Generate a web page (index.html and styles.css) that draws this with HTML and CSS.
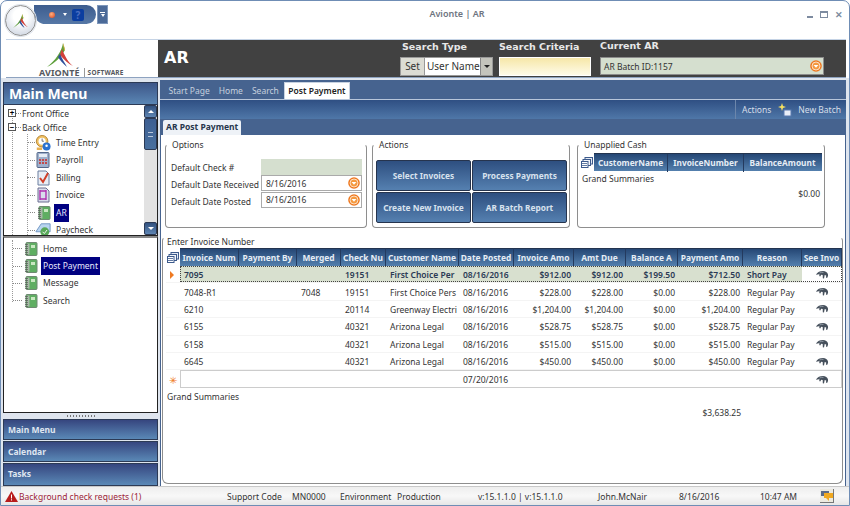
FILE: index.html
```html
<!DOCTYPE html>
<html lang="en">
<head>
<meta charset="utf-8">
<title>Avionte | AR</title>
<link rel="stylesheet" href="styles.css">
</head>
<body>
<svg class="defs" width="0" height="0" aria-hidden="true">
  <symbol id="amark" viewBox="0 0 26 24">
    <path d="M16 0C15 8 8 18 0 24 8 20 14 14 18 7z" fill="#5fa03c"/>
    <path d="M16 0c0 3 1 5 1 7l1 1c-.2-3-1-6-2-8z" fill="#e0b040"/>
    <path d="M15 6C18 14 22 20 26 23 22 21 17 17 13 12z" fill="#d2403a"/>
    <path d="M13 11C15 16 18 20 20 24 16 21 13 17 11 14z" fill="#2f4f9a"/>
  </symbol>
  <symbol id="book" viewBox="0 0 16 16">
    <rect x="4" y="1.500" width="11" height="13" rx="1" fill="#5fae62" stroke="#6f8a72"/>
    <rect x="5" y="2.500" width="2.500" height="11" fill="#a8b8a8"/>
    <rect x="9" y="4" width="4" height="3" fill="#c8e8c0"/>
    <path d="M3 3.500h3M3 5.500h3M3 7.500h3M3 9.500h3M3 11.500h3M3 13.500h3" stroke="#555" stroke-width=".7"/>
  </symbol>
  <symbol id="clock" viewBox="0 0 18 18">
    <circle cx="8" cy="7" r="6.5" fill="#f0c060" stroke="#b08030"/>
    <circle cx="8" cy="7" r="4" fill="#fff"/>
    <path d="M8 4v3h2" stroke="#666" fill="none"/>
    <circle cx="13" cy="13" r="4.5" fill="#2a72d0"/>
    <circle cx="13" cy="12" r="1.4" fill="#fff"/>
    <path d="M2 14h6v3H2z" fill="#e8b050"/>
  </symbol>
  <symbol id="calc" viewBox="0 0 16 16">
    <rect x="2" y="0.5" width="12" height="15" rx="1" fill="#9fb0cc" stroke="#55688a"/>
    <rect x="4" y="2" width="8" height="3" fill="#e6ecf5"/>
    <path d="M4 7h2v2H4zM7 7h2v2H7zM10 7h2v2h-2zM4 10h2v2H4zM7 10h2v2H7zM10 10h2v2h-2z" fill="#c24a4a"/>
  </symbol>
  <symbol id="bill" viewBox="0 0 16 16">
    <path d="M3 1h8l3 3v11H3z" fill="#e8edf5" stroke="#6a7ea0"/>
    <path d="M5 8l3 4 5-9" fill="none" stroke="#d0402a" stroke-width="2"/>
  </symbol>
  <symbol id="inv" viewBox="0 0 16 16">
    <path d="M3 1h8l3 3v11H3z" fill="#d8dcec" stroke="#6a6e90"/>
    <path d="M5 3v10M11 3v10M5 4h6M5 12h6" stroke="#b030b0" stroke-width="1.4" fill="none"/>
  </symbol>
  <symbol id="pay" viewBox="0 0 18 18">
    <path d="M1 11L7 2h10v9z" fill="#b8d4f0" stroke="#6a90c0"/>
    <circle cx="11" cy="11" r="5" fill="#58a858"/>
    <path d="M8.500 11l2 2 3-4" stroke="#fff" fill="none"/>
  </symbol>
  <symbol id="hand" viewBox="0 0 14 10">
    <path d="M1 4.500C2.500 2 5 1 8 1c2.500 0 4.500 1.500 5 3.500.2 1.200-.2 2.500-1 3.500l-1-.5.2-2-1.500-.5-.7 3.500-1.200-.2-.1-3.300-1.500-.2-1 1.800-1-.5.4-1.600-1.500-.3-1.100.6z" fill="#46505c"/>
    <path d="M4.500 3c1.200-.6 2.600-.8 4-.6" stroke="#a0aab4" stroke-width=".8" fill="none"/>
  </symbol>
  <symbol id="chooser" viewBox="0 0 12 11">
    <rect x="4" y="0.500" width="7.500" height="6.500" fill="#e4eaf4" stroke="#3c5a8c"/>
    <rect x="2" y="2.500" width="7.500" height="6" fill="#f2f5fa" stroke="#3c5a8c"/>
    <rect x="0.500" y="4.500" width="6.500" height="6" fill="#fff" stroke="#3c5a8c"/>
    <path d="M1 6.500h5M1 8.500h5" stroke="#3c5a8c" stroke-width=".8"/>
  </symbol>
  <symbol id="drop" viewBox="0 0 12 12">
    <circle cx="6" cy="6" r="5.800" fill="#ef7a22"/>
    <circle cx="6" cy="6" r="4" fill="#f59a40" stroke="#fff" stroke-width=".7"/>
    <path d="M3.600 5h4.800L6 7.800z" fill="#fff"/>
  </symbol>
</svg>
<div class="window">
  <div class="titlebar">
    <div class="orb">
      <svg width="15" height="14"><use href="#amark"/></svg>
    </div>
    <div class="quickbar">
      <span class="qa-dot"></span>
      <span class="qa-caret"></span>
      <span class="qa-help">?</span>
    </div>
    <div class="qa-more"><span class="qa-more-bar"></span><span class="qa-caret"></span></div>
    <div class="app-title">Avionte | AR</div>
    <div class="winbtns">
      <span class="win-min"></span>
      <span class="win-max"></span>
      <span class="win-close">✕</span>
    </div>
  </div>

  <div class="header">
    <div class="logo">
      <svg class="logo-mark" width="26" height="24"><use href="#amark"/></svg>
      <div class="logo-text"><span class="logo-name">AVIONTÉ</span><span class="logo-sw">SOFTWARE</span></div>
    </div>
    <div class="header-bar">
      <div class="page-title">AR</div>
      <div class="search-type">
        <div class="hlabel">Search Type</div>
        <div class="type-ctl"><span class="set-btn">Set</span><span class="type-val">User Name</span><span class="type-drop"></span></div>
      </div>
      <div class="search-crit">
        <div class="hlabel">Search Criteria</div>
        <div class="crit-input"></div>
      </div>
      <div class="current-ar">
        <div class="hlabel">Current AR</div>
        <div class="ar-field"><span>AR Batch ID:1157</span><svg width="12" height="12"><use href="#drop"/></svg></div>
      </div>
    </div>
  </div>

  <div class="main">
    <aside class="sidebar">
      <div class="menu-title">Main Menu</div>
      <div class="tree-top">
        <div class="tree-scroll">
          <div class="root"><span class="exp">+</span><span class="twig"></span><span>Front Office</span></div>
          <div class="root"><span class="exp">−</span><span class="twig"></span><span>Back Office</span></div>
          <ul class="branch">
            <li><span class="twig long"></span><svg width="16" height="16"><use href="#clock"/></svg><span class="lbl">Time Entry</span></li>
            <li><span class="twig long"></span><svg width="16" height="16"><use href="#calc"/></svg><span class="lbl">Payroll</span></li>
            <li><span class="twig long"></span><svg width="16" height="16"><use href="#bill"/></svg><span class="lbl">Billing</span></li>
            <li><span class="twig long"></span><svg width="16" height="16"><use href="#inv"/></svg><span class="lbl">Invoice</span></li>
            <li><span class="twig long"></span><svg width="16" height="16"><use href="#book"/></svg><span class="lbl sel">AR</span></li>
            <li><span class="twig long"></span><svg width="16" height="16"><use href="#pay"/></svg><span class="lbl">Paycheck</span></li>
          </ul>
        </div>
        <div class="scrollbar">
          <span class="sb-btn"><i class="up"></i></span>
          <span class="sb-thumb"><i></i></span>
          <span class="sb-track"></span>
          <span class="sb-btn"><i class="down"></i></span>
        </div>
      </div>
      <div class="tree-bottom">
        <ul class="branch sub">
          <li><span class="twig"></span><svg width="16" height="16"><use href="#book"/></svg><span class="lbl">Home</span></li>
          <li><span class="twig"></span><svg width="16" height="16"><use href="#book"/></svg><span class="lbl sel">Post Payment</span></li>
          <li><span class="twig"></span><svg width="16" height="16"><use href="#book"/></svg><span class="lbl">Message</span></li>
          <li><span class="twig"></span><svg width="16" height="16"><use href="#book"/></svg><span class="lbl">Search</span></li>
        </ul>
      </div>
      <div class="grip"></div>
      <div class="nav-btn">Main Menu</div>
      <div class="nav-btn">Calendar</div>
      <div class="nav-btn">Tasks</div>
    </aside>

    <section class="content">
      <div class="tabstrip">
        <span class="tab">Start Page</span>
        <span class="tab">Home</span>
        <span class="tab">Search</span>
        <span class="tab active">Post Payment</span>
      </div>
      <div class="toolbar">
        <span class="tool-sep"></span>
        <span class="tool">Actions</span>
        <svg class="tool-icon" width="14" height="14" viewBox="0 0 14 14"><path d="M4 0l1 3 3 1-3 1-1 3-1-3-3-1 3-1z" fill="#f5e060"/><rect x="6" y="7" width="7" height="6" fill="#e8eef8" stroke="#5a7ab0"/></svg>
        <span class="tool">New Batch</span>
      </div>
      <div class="subtabs"><span class="subtab">AR Post Payment</span></div>
      <div class="panel">
        <div class="groups">
          <div class="group options">
            <div class="legend">Options</div>
            <div class="form">
              <label>Default Check #</label><div class="field green"></div>
              <label>Default Date Received</label><div class="field"><span>8/16/2016</span><svg width="12" height="12"><use href="#drop"/></svg></div>
              <label>Default Date Posted</label><div class="field"><span>8/16/2016</span><svg width="12" height="12"><use href="#drop"/></svg></div>
            </div>
          </div>
          <div class="group actions">
            <div class="legend">Actions</div>
            <div class="btn-grid">
              <span class="action-btn">Select Invoices</span>
              <span class="action-btn">Process Payments</span>
              <span class="action-btn">Create New Invoice</span>
              <span class="action-btn">AR Batch Report</span>
            </div>
          </div>
          <div class="group unapplied">
            <div class="legend">Unapplied Cash</div>
            <div class="mini-head">
              <svg width="12" height="11"><use href="#chooser"/></svg>
              <div class="mini-cols"><span>CustomerName</span><span>InvoiceNumber</span><span>BalanceAmount</span></div>
            </div>
            <div class="summary-label">Grand Summaries</div>
            <div class="summary-val">$0.00</div>
          </div>
        </div>

        <div class="group invoices">
          <div class="legend">Enter Invoice Number</div>
          <div class="grid">
            <div class="row head"><span class="mark"><svg width="12" height="11"><use href="#chooser"/></svg></span>
              <b>Invoice Num</b><b>Payment By</b><b>Merged</b><b>Check Nu</b><b>Customer Name</b><b>Date Posted</b><b>Invoice Amo</b><b>Amt Due</b><b>Balance A</b><b>Payment Amo</b><b>Reason</b><b>See Invo</b>
            </div>
            <div class="row current"><span class="mark"><i class="arrow"></i></span>
              <span>7095</span><span></span><span></span><span>19151</span><span>First Choice Per</span><span>08/16/2016</span><span class="r">$912.00</span><span class="r">$912.00</span><span class="r">$199.50</span><span class="r">$712.50</span><span>Short Pay</span><span class="see"><svg width="14" height="10"><use href="#hand"/></svg></span>
            </div>
            <div class="row"><span class="mark"></span>
              <span>7048-R1</span><span></span><span>7048</span><span>19151</span><span>First Choice Pers</span><span>08/16/2016</span><span class="r">$228.00</span><span class="r">$228.00</span><span class="r">$0.00</span><span class="r">$228.00</span><span>Regular Pay</span><span class="see"><svg width="14" height="10"><use href="#hand"/></svg></span>
            </div>
            <div class="row"><span class="mark"></span>
              <span>6210</span><span></span><span></span><span>20114</span><span>Greenway Electri</span><span>08/16/2016</span><span class="r">$1,204.00</span><span class="r">$1,204.00</span><span class="r">$0.00</span><span class="r">$1,204.00</span><span>Regular Pay</span><span class="see"><svg width="14" height="10"><use href="#hand"/></svg></span>
            </div>
            <div class="row"><span class="mark"></span>
              <span>6155</span><span></span><span></span><span>40321</span><span>Arizona Legal</span><span>08/16/2016</span><span class="r">$528.75</span><span class="r">$528.75</span><span class="r">$0.00</span><span class="r">$528.75</span><span>Regular Pay</span><span class="see"><svg width="14" height="10"><use href="#hand"/></svg></span>
            </div>
            <div class="row"><span class="mark"></span>
              <span>6158</span><span></span><span></span><span>40321</span><span>Arizona Legal</span><span>08/16/2016</span><span class="r">$515.00</span><span class="r">$515.00</span><span class="r">$0.00</span><span class="r">$515.00</span><span>Regular Pay</span><span class="see"><svg width="14" height="10"><use href="#hand"/></svg></span>
            </div>
            <div class="row"><span class="mark"></span>
              <span>6645</span><span></span><span></span><span>40321</span><span>Arizona Legal</span><span>08/16/2016</span><span class="r">$450.00</span><span class="r">$450.00</span><span class="r">$0.00</span><span class="r">$450.00</span><span>Regular Pay</span><span class="see"><svg width="14" height="10"><use href="#hand"/></svg></span>
            </div>
            <div class="row newrow"><span class="mark star">✳</span>
              <span></span><span></span><span></span><span></span><span></span><span>07/20/2016</span><span></span><span></span><span></span><span></span><span></span><span class="see"><svg width="14" height="10"><use href="#hand"/></svg></span>
            </div>
          </div>
          <div class="grand">Grand Summaries</div>
          <div class="grand-total">$3,638.25</div>
        </div>
      </div>
    </section>
  </div>

  <footer class="status">
    <svg class="warn" width="13" height="11" viewBox="0 0 13 11"><path d="M6.500 0L13 11H0z" fill="#b81c1c"/><path d="M6 3.500h1v4H6zM6 8.300h1v1.200H6z" fill="#fff"/></svg>
    <span class="alert">Background check requests (1)</span>
    <span class="st-support">Support Code</span>
    <span class="st-code">MN0000</span>
    <span class="st-env">Environment</span>
    <span class="st-prod">Production</span>
    <span class="st-ver">v:15.1.1.0 | v:15.1.1.0</span>
    <span class="st-user">John.McNair</span>
    <span class="st-date">8/16/2016</span>
    <span class="st-time">10:47 AM</span>
    <span class="st-chat"><svg width="12" height="10" viewBox="0 0 12 10"><rect x="0" y="0" width="8" height="5" fill="#5a6a88"/><rect x="3" y="2" width="9" height="5" fill="#f0a820"/><path d="M8 7v3l-3-3z" fill="#f0a820"/></svg></span>
  </footer>
</div>
</body>
</html>
```

FILE: styles.css
```css
* { box-sizing: border-box; }
html, body { margin: 0; padding: 0; }
body { width: 850px; height: 506px; overflow: hidden; font-family: "Noto Sans", "Liberation Sans", sans-serif; font-size: 8.5px; color: #333; background: #fff; }
.defs { position: absolute; }
ul { list-style: none; margin: 0; padding: 0; }

.window { width: 850px; height: 506px; display: flex; flex-direction: column; background: #fff; border: 1px solid #6f8db5; border-radius: 7px 7px 0 0; overflow: hidden; }

/* title bar */
.titlebar { height: 38px; flex: none; display: flex; align-items: flex-start; position: relative; padding: 4px 0 0 4px; }
.orb { width: 31px; height: 31px; border-radius: 50%; flex: none; border: 1px solid #8d8d8d; background: radial-gradient(circle at 50% 35%, #fff 30%, #cfd6e2 85%, #9aa7b8); display: flex; align-items: center; justify-content: center; position: relative; z-index: 1; box-shadow: 0 0 0 1px #dfe4ec; }
.quickbar { width: 62px; height: 19px; margin: 0 0 0 -2px; background: linear-gradient(#3d5c8e, #5678a6); border-radius: 0 10px 10px 0; border-bottom-left-radius: 12px; display: flex; align-items: center; padding-left: 15px; }
.qa-dot { width: 6px; height: 6px; border-radius: 50%; background: radial-gradient(circle at 40% 35%, #ffb080, #d8401a); margin-right: 8px; }
.qa-caret { width: 0; height: 0; border-left: 2.5px solid transparent; border-right: 2.5px solid transparent; border-top: 3px solid #fff; }
.qa-help { width: 12px; height: 12px; margin-left: 5px; background: #0b3ea0; border-radius: 2px; color: #4c6fc0; font-weight: 700; font-size: 10px; line-height: 12px; text-align: center; }
.qa-more { width: 11px; height: 19px; margin-left: 1px; background: #4b6a98; border: 1px solid #7e97bb; display: flex; flex-direction: column; align-items: center; justify-content: center; gap: 1px; }
.qa-more-bar { width: 5px; height: 1px; background: #fff; }
.app-title { position: absolute; left: 0; right: 0; top: 6px; padding-left: 64px; text-align: center; color: #6e7480; font-weight: 600; font-size: 9px; }
.winbtns { position: absolute; right: 6px; top: 9px; display: flex; align-items: center; gap: 7px; }
.win-min { width: 6px; height: 2px; margin-top: 5px; background: #7d8ba0; }
.win-max { width: 8px; height: 7px; border: 1px solid #7d8ba0; border-top-width: 2px; }
.win-close { font-size: 9px; line-height: 9px; color: #7d8ba0; font-weight: 700; }

/* header */
.header { height: 39px; flex: none; display: flex; margin-right: 3px; border-top: 1px solid #c5d3e5; margin-left: 5px; border-bottom: 1px solid #8ea3c0; }
.logo { width: 152px; flex: none; display: flex; flex-direction: column; align-items: flex-start; padding-left: 33px; }
.logo-mark { margin: 3px 0 0 8px; flex: none; }
.logo-text { display: flex; align-items: center; margin-top: 1px; white-space: nowrap; }
.logo-name { font-size: 9px; font-weight: 700; color: #55585e; letter-spacing: .1px; padding-right: 4px; border-right: 1px solid #999; line-height: 9px; }
.logo-sw { font-size: 6.500px; font-weight: 700; color: #55585e; margin-left: 3px; letter-spacing: .2px; }
.header-bar { flex: 1; background: #414141; display: flex; color: #fff; }
.page-title { width: 242px; padding: 8px 0 0 6px; font-size: 16px; font-weight: 700; line-height: 20px; font-family: "DejaVu Sans", sans-serif; }
.hlabel { font-weight: 700; font-size: 9.5px; line-height: 12px; color: #e8e8e8; font-family: "DejaVu Sans", sans-serif; }
.search-type { width: 99px; padding-top: 1px; }
.search-type .hlabel { padding-left: 2px; }
.type-ctl { margin-top: 4px; display: flex; height: 19px; width: 93px; background: #d0d0c8; border: 1px solid #999; color: #333; font-size: 10px; line-height: 17px; }
.set-btn { width: 24px; text-align: center; background: #dcdcd4; border-right: 1px solid #999; }
.type-val { width: 55px; background: #fff; padding-left: 2px; white-space: nowrap; overflow: hidden; }
.type-drop { flex: 1; position: relative; background: #c4c4bc; border-left: 1px solid #888; }
.type-drop::after { content: ""; position: absolute; left: 3px; top: 7px; border-left: 3px solid transparent; border-right: 3px solid transparent; border-top: 3px solid #222; }
.search-crit { width: 101px; padding-top: 1px; }
.crit-input { margin-top: 4px; width: 92px; height: 19px; background: linear-gradient(#f6e7a8, #fffbe8); border: 1px solid #fff; }
.current-ar { width: 224px; }
.ar-field { margin-top: 5px; height: 18px; background: #d5dfcf; border: 1px solid #8c8c8c; color: #333; font-size: 8.5px; display: flex; align-items: center; justify-content: space-between; padding: 0 1px 0 3px; }
.ar-field svg { flex: none; }

/* main */
.main { flex: 1; display: flex; min-height: 0; background: #dfe5ee; }
.sidebar { width: 155px; margin-left: 2px; flex: none; padding-top: 4px; display: flex; flex-direction: column; }
.menu-title { height: 23px; flex: none; background: linear-gradient(#3d5688, #5a86b4); border: 1px solid #2c3a55; color: #fff; font-size: 14px; font-weight: 700; padding-left: 5px; line-height: 21px; }
.tree-top { height: 131px; flex: none; display: flex; background: #fff; border: 1px solid #222; border-top: 0; overflow: hidden; }
.tree-scroll { flex: 1; overflow: hidden; padding: 1px 0 0 4px; position: relative; }
.tree-scroll::before { content: ""; position: absolute; left: 8px; top: 10px; bottom: 0; border-left: 1px dotted #999; }
.root { display: flex; align-items: center; height: 14px; color: #333; position: relative; }
.exp { width: 8px; height: 8px; flex: none; border: 1px solid #555; background: #fff; font-size: 8px; line-height: 5px; text-align: center; color: #000; font-weight: 700; }
.twig { width: 5px; flex: none; border-top: 1px dotted #888; margin-right: 1px; }
.twig.long { width: 8px; margin-right: 0; }
.branch { margin-left: 8px; border-left: 1px dotted #999; padding-top: 0; }
.tree-scroll .branch { margin-left: 7px; padding-left: 12px; border-left: 0; position: relative; }
.tree-scroll .branch::before { content: ""; position: absolute; left: 12px; top: 0; bottom: 0; border-left: 1px dotted #999; }
.branch li { height: 17.5px; display: flex; align-items: center; }
.branch svg { flex: none; }
.lbl { margin-left: 3px; height: 18px; line-height: 18px; padding: 0 2px; color: #333; white-space: nowrap; }
.lbl.sel { background: #000080; color: #e8e8ff; }
.scrollbar { width: 13px; flex: none; display: flex; flex-direction: column; background: #e2e2e2; }
.sb-btn { height: 13px; flex: none; background: linear-gradient(#31517f, #5e85b3); border: 1px solid #2c3a55; border-radius: 2px; display: flex; align-items: center; justify-content: center; }
.sb-btn i { width: 0; height: 0; border-left: 3px solid transparent; border-right: 3px solid transparent; }
.sb-btn i.up { border-bottom: 3px solid #fff; }
.sb-btn i.down { border-top: 3px solid #fff; }
.sb-thumb { height: 32px; flex: none; background: linear-gradient(#3d5f92, #49709f); border: 1px solid #2c3a55; border-radius: 2px; display: flex; align-items: center; justify-content: center; }
.sb-thumb i { width: 5px; height: 5px; border-top: 1px solid #b8c6da; border-bottom: 1px solid #b8c6da; }
.sb-track { flex: 1; }
.tree-bottom { height: 177px; flex: none; background: #fff; border: 1px solid #222; border-top: 2px solid #888; padding: 2px 0 0 8px; }
.branch.sub { margin-left: 0; height: 62px; border-left: 1px dotted #999; }
.branch.sub li { height: 17.400px; }
.branch.sub .twig { width: 9px; margin-right: 0; }
.grip { height: 6px; flex: none; background: repeating-linear-gradient(90deg, #777 0 1px, transparent 1px 3px) center / 28px 2px no-repeat; }
.nav-btn { height: 21px; margin-bottom: 1px; flex: none; background: linear-gradient(#36467f, #5a88b6); border: 1px solid #2c3a55; color: #dfe6f0; font-weight: 700; font-size: 8.5px; line-height: 19px; padding-left: 4px; }
.nav-btn:last-child { margin-bottom: 0; height: 23px; }

/* content */
.content { width: 686px; margin-left: 2px; flex: none; display: flex; flex-direction: column; }
.tabstrip { margin-top: 2px; height: 20px; flex: none; background: #46638f; display: flex; align-items: flex-end; padding-left: 4px; border-bottom: 1px solid #b8c6da; }
.tab { color: #c5d0de; height: 17px; line-height: 17px; padding: 0 4.500px; }
.tab.active { background: #fff; color: #222; font-weight: 600; padding: 0 3px; margin-left: 1px; border: 1px solid #c8d2e0; border-bottom: 0; line-height: 15px; }
.toolbar { height: 19px; flex: none; background: linear-gradient(#2f4f83, #4f77a8); display: flex; align-items: center; justify-content: flex-end; color: #d7dfe9; padding-right: 5px; }
.tool-sep { width: 1px; height: 19px; background: #6c86ab; margin-right: 6px; }
.tool-icon { margin: 0 6px 0 7px; }
.subtabs { height: 16px; flex: none; background: #46638f; padding: 1px 0 0 3px; display: flex; }
.subtab { background: #eef2f7; color: #27364c; font-weight: 700; height: 15px; line-height: 14px; padding: 0 3px; border-radius: 2px 2px 0 0; }
.panel { flex: 1; background: #fff; border-left: 1px solid #46638f; border-right: 1px solid #46638f; padding: 9px 2px 2px 1px; display: flex; flex-direction: column; min-height: 0; }
.groups { display: flex; height: 84px; margin-left: 3px; flex: none; }
.group { border: 1px solid #8e8e8e; border-top-color: transparent; border-radius: 4px; position: relative; }
.legend { position: absolute; left: 5px; top: -6px; background: #fff; padding: 0 1px; line-height: 11px; color: #333; }
.options { width: 202px; padding: 14px 3px 0 5px; }
.form { display: grid; grid-template-columns: 90px 101px; grid-template-rows: 16px 16px 17px; align-items: center; }
.form label { white-space: nowrap; padding-top: 3px; }
.form label:first-child { padding-top: 0; }
.field { height: 16px; background: #fff; border: 1px solid #aaa; display: flex; align-items: center; justify-content: space-between; padding: 0 1px 0 4px; }
.field.green { background: #d5dfcf; border-color: #d5dfcf; }
.actions { width: 198px; margin-left: 5px; padding: 15px 0 0 3px; }
.btn-grid { display: grid; grid-template-columns: 95px 95px; grid-auto-rows: 31px; gap: 1px; }
.action-btn { background: linear-gradient(#2e4f80, #5580b0); border: 1px solid #26344e; border-radius: 2px; color: #d8e2ee; font-weight: 700; font-size: 8.3px; display: flex; align-items: center; justify-content: center; white-space: nowrap; }
.unapplied { width: 248px; margin-left: 7px; padding: 8px 2px 0 3px; }
.mini-head { display: flex; align-items: center; gap: 1px; }
.mini-cols { flex: 1; height: 18px; display: grid; grid-template-columns: 74px 76px 77px; background: linear-gradient(#254775, #5480ae); color: #e6edf5; font-weight: 700; font-size: 8.3px; line-height: 18px; text-align: center; border-top: 1px solid #23344f; }
.mini-cols span { border-right: 1px solid #243a5e; }
.mini-cols span:last-child { border-right: 0; }
.summary-label { margin: 1px 0 0 1px; line-height: 13px; }
.summary-val { text-align: right; margin: 2px 2px 0 0; line-height: 13px; }

.invoices { flex: 1; margin-top: 9px; padding: 10px 0 0 3px; border-radius: 4px 4px 6px 6px; }
.invoices > .legend { left: 3px; top: -2px; }
.row { display: grid; grid-template-columns: 14px 59px 58px 44px 45px 73px 55px 60px 52px 52px 65px 59px 40px; height: 17.400px; align-items: center; white-space: nowrap; padding-top: 1px; }
.row > span { padding-left: 4px; overflow: hidden; }
.row > .r { text-align: right; padding: 0 3px 0 0; }
.row > .mark { padding: 0; display: flex; justify-content: center; overflow: visible; }
.row > .see { padding: 0; height: 100%; display: flex; align-items: center; justify-content: center; }
.row:not(.head):not(.newrow) { border-bottom: 1px solid #f4f4f4; }
.row.head { height: 18px; padding-top: 0; }
.head b { background: linear-gradient(#254775, #5480ae); border-top: 1px solid #23344f; border-right: 1px solid #243a5e; color: #e6edf5; font-size: 8.4px; height: 18px; line-height: 17px; text-align: center; overflow: hidden; }
.row.current { background: linear-gradient(90deg, #fff 14px, #d8e0cf 14px); font-weight: 600; color: #2b3a55; position: relative; }
.row.current::after { content: ""; position: absolute; left: 14px; right: 0; top: 0; bottom: 0; border: 1px dotted #444; pointer-events: none; }
.row.current > .see { background: #fff; }
.arrow { width: 0; height: 0; margin-right: 3px; border-left: 4px solid #ef7a22; border-top: 4px solid transparent; border-bottom: 4px solid transparent; }
.star { color: #ef7a22; font-size: 10px; line-height: 10px; }
.row.newrow { position: relative; }
.row.newrow::after { content: ""; position: absolute; left: 14px; right: 0; top: 0; bottom: 0; border: 1px solid #ccc; pointer-events: none; }
.grand { margin: 2px 0 0 1px; line-height: 13px; }
.grand-total { margin: 3px 0 0 0; width: 575px; text-align: right; line-height: 13px; }

/* status */
.status { height: 19px; flex: none; background: linear-gradient(#eeeeee, #f8f8f8 50%, #e6e6e6); border-top: 1px solid #c8c8c8; display: flex; align-items: center; padding-left: 4px; white-space: nowrap; position: relative; }
.warn { flex: none; }
.alert { color: #9c2438; margin-left: 1px; width: 208px; }
.st-support { width: 65px; }
.st-code { width: 48px; }
.st-env { width: 57px; }
.st-prod { width: 81px; }
.st-ver { width: 120px; }
.st-user { width: 81px; }
.st-date { width: 81px; }
.st-time { width: 60px; }
.st-chat { width: 14px; height: 14px; background: #eceae0; border-right: 1px solid #777; border-bottom: 1px solid #777; display: flex; align-items: center; justify-content: center; }
```
